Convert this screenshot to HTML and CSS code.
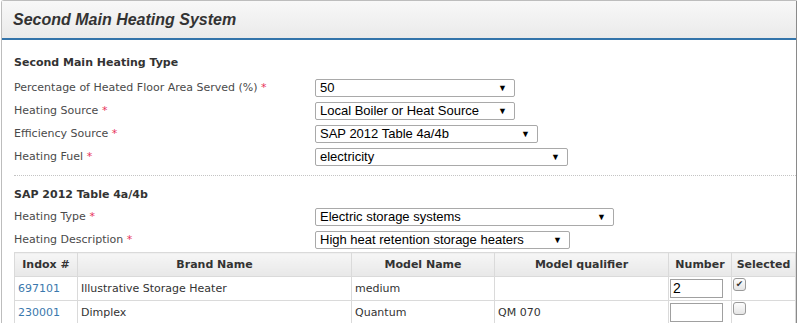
FILE: index.html
```html
<!DOCTYPE html>
<html>
<head>
<meta charset="utf-8">
<link rel="stylesheet" href="styles.css">
</head>
<body>
<div class="panel">
  <div class="panel-head"><h1>Second Main Heating System</h1></div>
  <div class="panel-body">
    <h2>Second Main Heating Type</h2>
    <div class="row"><label>Percentage of Heated Floor Area Served (%) <span class="req">*</span></label><div class="select w199"><span>50</span><i>▼</i></div></div>
    <div class="row"><label>Heating Source <span class="req">*</span></label><div class="select w199"><span>Local Boiler or Heat Source</span><i>▼</i></div></div>
    <div class="row"><label>Efficiency Source <span class="req">*</span></label><div class="select w222"><span>SAP 2012 Table 4a/4b</span><i>▼</i></div></div>
    <div class="row"><label>Heating Fuel <span class="req">*</span></label><div class="select w252"><span>electricity</span><i>▼</i></div></div>
    <hr class="divider">
    <h2 class="sec2">SAP 2012 Table 4a/4b</h2>
    <div class="row"><label>Heating Type <span class="req">*</span></label><div class="select w298"><span>Electric storage systems</span><i>▼</i></div></div>
    <div class="row"><label>Heating Description <span class="req">*</span></label><div class="select w254"><span>High heat retention storage heaters</span><i>▼</i></div></div>
    <table class="grid">
      <colgroup><col class="c1"><col class="c2"><col class="c3"><col class="c4"><col class="c5"><col class="c6"></colgroup>
      <thead>
        <tr><th>Indox #</th><th>Brand Name</th><th>Model Name</th><th>Model qualifier</th><th>Number</th><th>Selected</th></tr>
      </thead>
      <tbody>
        <tr><td><a href="#">697101</a></td><td>Illustrative Storage Heater</td><td>medium</td><td></td><td><div class="num">2</div></td><td><span class="chk on">✔</span></td></tr>
        <tr><td><a href="#">230001</a></td><td>Dimplex</td><td>Quantum</td><td>QM 070</td><td><div class="num"></div></td><td><span class="chk"></span></td></tr>
      </tbody>
    </table>
  </div>
</div>
</body>
</html>
```

FILE: styles.css
```css
html, body { margin: 0; padding: 0; background: #fff; }
body { font-family: "DejaVu Sans", Verdana, sans-serif; color: #333; overflow: hidden; }
.panel {
  margin-left: 1px;
  width: 794px;
  border: 1px solid #bdbdbd;
  border-right: 2px solid #8a8a8a;
  border-bottom: none;
  border-radius: 3px 3px 0 0;
  height: 330px;
}
.panel-head {
  height: 37px;
  background: linear-gradient(#f8f8f8, #eaeaea);
  border-bottom: 2px solid #3374aa;
  display: flex;
  align-items: center;
  padding-left: 11px;
}
.panel-head h1 {
  margin: 0;
  font-family: "Liberation Sans", Arial, sans-serif;
  font-style: italic;
  font-weight: bold;
  font-size: 16px;
  color: #333;
}
.panel-body { padding: 16px 0 0 12px; }
h2 {
  margin: 0 0 6px 0;
  font-size: 11px;
  font-weight: bold;
  color: #333;
  height: 14px;
}
h2.sec2 { margin-bottom: 3px; }
.row { display: flex; align-items: center; height: 23px; }
.row label { width: 301px; font-size: 11px; color: #4a4a4a; }
.req { color: #e8335a; }
.select {
  height: 18px;
  box-sizing: border-box;
  border: 1px solid #a9a9a9;
  border-radius: 2px;
  display: flex;
  align-items: center;
  justify-content: space-between;
  padding: 0 7px 0 4px;
  font-family: "Liberation Sans", Arial, sans-serif;
  font-size: 13px;
  color: #000;
}
.select i { font-style: normal; font-size: 9px; }
.w199 { width: 200px; }
.w222 { width: 223px; }
.w252 { width: 253px; }
.w298 { width: 299px; }
.w254 { width: 255px; }
.divider { border: none; border-top: 1px dotted #c4c4c4; margin: 7px 0 12px 0; }
.grid {
  border-collapse: collapse;
  table-layout: fixed;
  margin-top: 1px;
  width: 781px;
  font-size: 11px;
}
.grid th, .grid td { border: 1px solid #dadada; }
.grid th {
  height: 23px;
  background: linear-gradient(#f6f6f6, #e8e8e8);
  font-weight: bold;
  color: #333;
  padding: 0 2px;
  white-space: nowrap;
}
.grid td { height: 23px; padding: 0 3px; color: #333; vertical-align: middle; }
.grid a { color: #3a78ad; text-decoration: none; }
.c1 { width: 63px; }
.c2 { width: 274px; }
.c3 { width: 143px; }
.c4 { width: 174px; }
.c5 { width: 63px; }
.c6 { width: 64px; }
.grid td:nth-child(5) { padding: 0 1px; }
.grid td:nth-child(6) { padding: 0 1px; }
.num {
  width: 53px; height: 19px; box-sizing: border-box;
  border: 1px solid #a0a0a0;
  font-family: "Liberation Sans", Arial, sans-serif; font-size: 14px; color: #000;
  padding-left: 2px; line-height: 17px;
}
.chk {
  display: inline-block; width: 11px; height: 11px;
  border: 1px solid #9a9a9a; border-radius: 3px;
  background: linear-gradient(#fdfdfd, #e5e5e5);
  font-size: 9px; line-height: 11px; text-align: center; color: #333;
  vertical-align: top; margin-top: -4px;
}
```
